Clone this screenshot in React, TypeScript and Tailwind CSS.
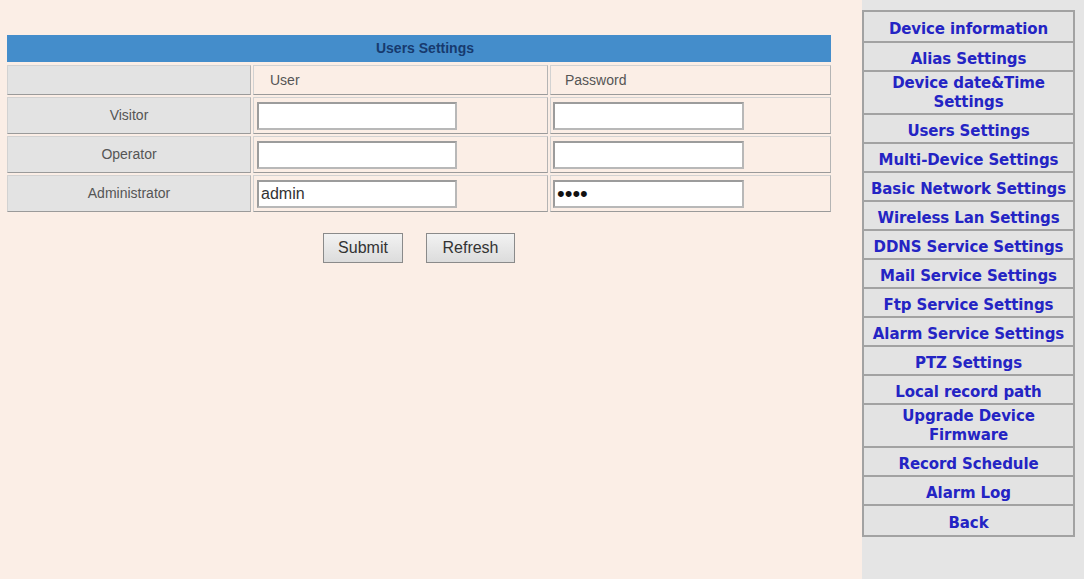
import React from "react";

const menuItems: string[][] = [
  ["Device information"],
  ["Alias Settings"],
  ["Device date&Time", "Settings"],
  ["Users Settings"],
  ["Multi-Device Settings"],
  ["Basic Network Settings"],
  ["Wireless Lan Settings"],
  ["DDNS Service Settings"],
  ["Mail Service Settings"],
  ["Ftp Service Settings"],
  ["Alarm Service Settings"],
  ["PTZ Settings"],
  ["Local record path"],
  ["Upgrade Device", "Firmware"],
  ["Record Schedule"],
  ["Alarm Log"],
  ["Back"],
];

const users = [
  { label: "Visitor", user: "", pass: "" },
  { label: "Operator", user: "", pass: "" },
  { label: "Administrator", user: "admin", pass: "admin" },
];

const cell =
  "border border-[#d2d2d2] border-b-[#9a9a9a] border-r-[#b4b4b4]";

export default function App() {
  return (
    <div className="flex h-[579px] w-[1084px] overflow-hidden bg-[#fbeee6] font-['Liberation_Sans',Arial,sans-serif]">
      {/* settings form */}
      <div className="w-[862px] shrink-0 pl-[7px] pt-[35px]">
        <div className="w-[824px]">
          <div className="flex h-[27px] items-center justify-center pl-[12px] bg-[#448dcb] text-[14px] font-bold text-[#173a6e]">
            Users Settings
          </div>
          <div className="mt-[3px] flex flex-col gap-[2px]">
            <div className="flex h-[30px] gap-[2px]">
              <div className={`w-[244px] bg-[#e3e3e3] ${cell}`} />
              <div className={`flex w-[295px] items-center pl-[16px] text-[14px] text-[#555] ${cell}`}>
                User
              </div>
              <div className={`flex flex-1 items-center pl-[14px] text-[14px] text-[#555] ${cell}`}>
                Password
              </div>
            </div>
            {users.map((u) => (
              <div key={u.label} className="flex h-[37px] gap-[2px]">
                <div className={`flex w-[244px] items-center justify-center bg-[#e3e3e3] text-[14px] text-[#555] ${cell}`}>
                  {u.label}
                </div>
                <div className={`flex w-[295px] items-center pl-[3px] ${cell}`}>
                  <input
                    type="text"
                    defaultValue={u.user}
                    className="h-[28px] w-[200px] border-2 border-[#b8b8b8] border-t-[#9c9c9c] border-l-[#9c9c9c] bg-white px-[2px] text-[16px] text-[#333] outline-none"
                  />
                </div>
                <div className={`flex flex-1 items-center pl-[2px] ${cell}`}>
                  <input
                    type="password"
                    defaultValue={u.pass.slice(0, 4)}
                    className="h-[28px] w-[191px] border-2 border-[#b8b8b8] border-t-[#9c9c9c] border-l-[#9c9c9c] bg-white px-[2px] text-[22px] text-[#111] outline-none"
                  />
                </div>
              </div>
            ))}
          </div>
          <div className="mt-[21px] flex justify-center gap-[23px]">
            <button className="h-[30px] w-[80px] border border-[#8a8a8a] bg-gradient-to-b from-[#f2f2f2] to-[#dcdcdc] text-[16px] text-[#333]">
              Submit
            </button>
            <button className="h-[30px] w-[89px] border border-[#8a8a8a] bg-gradient-to-b from-[#f2f2f2] to-[#dcdcdc] text-[16px] text-[#333]">
              Refresh
            </button>
          </div>
        </div>
      </div>

      {/* right-hand menu */}
      <div className="flex-1 bg-[#e5e5e5] pt-[10px]">
        <div className="w-[213px] border-2 border-[#a2a2a2] bg-[#e3e3e3] font-['DejaVu_Sans',Verdana,sans-serif]">
          {menuItems.map((lines, i) => (
            <div
              key={i}
              className={`flex flex-col items-center justify-center text-center text-[15px] font-bold leading-[19px] tracking-[-0.1px] text-[#2424c4] ${
                i === 0 ? "h-[31px] pt-[5px]" : lines.length > 1 ? "h-[43px]" : "h-[29px] pt-[5px]"
              } ${i < menuItems.length - 1 ? "border-b-2 border-[#a2a2a2]" : ""}`}
            >
              {lines.map((l) => (
                <span key={l}>{l}</span>
              ))}
            </div>
          ))}
        </div>
      </div>
    </div>
  );
}
